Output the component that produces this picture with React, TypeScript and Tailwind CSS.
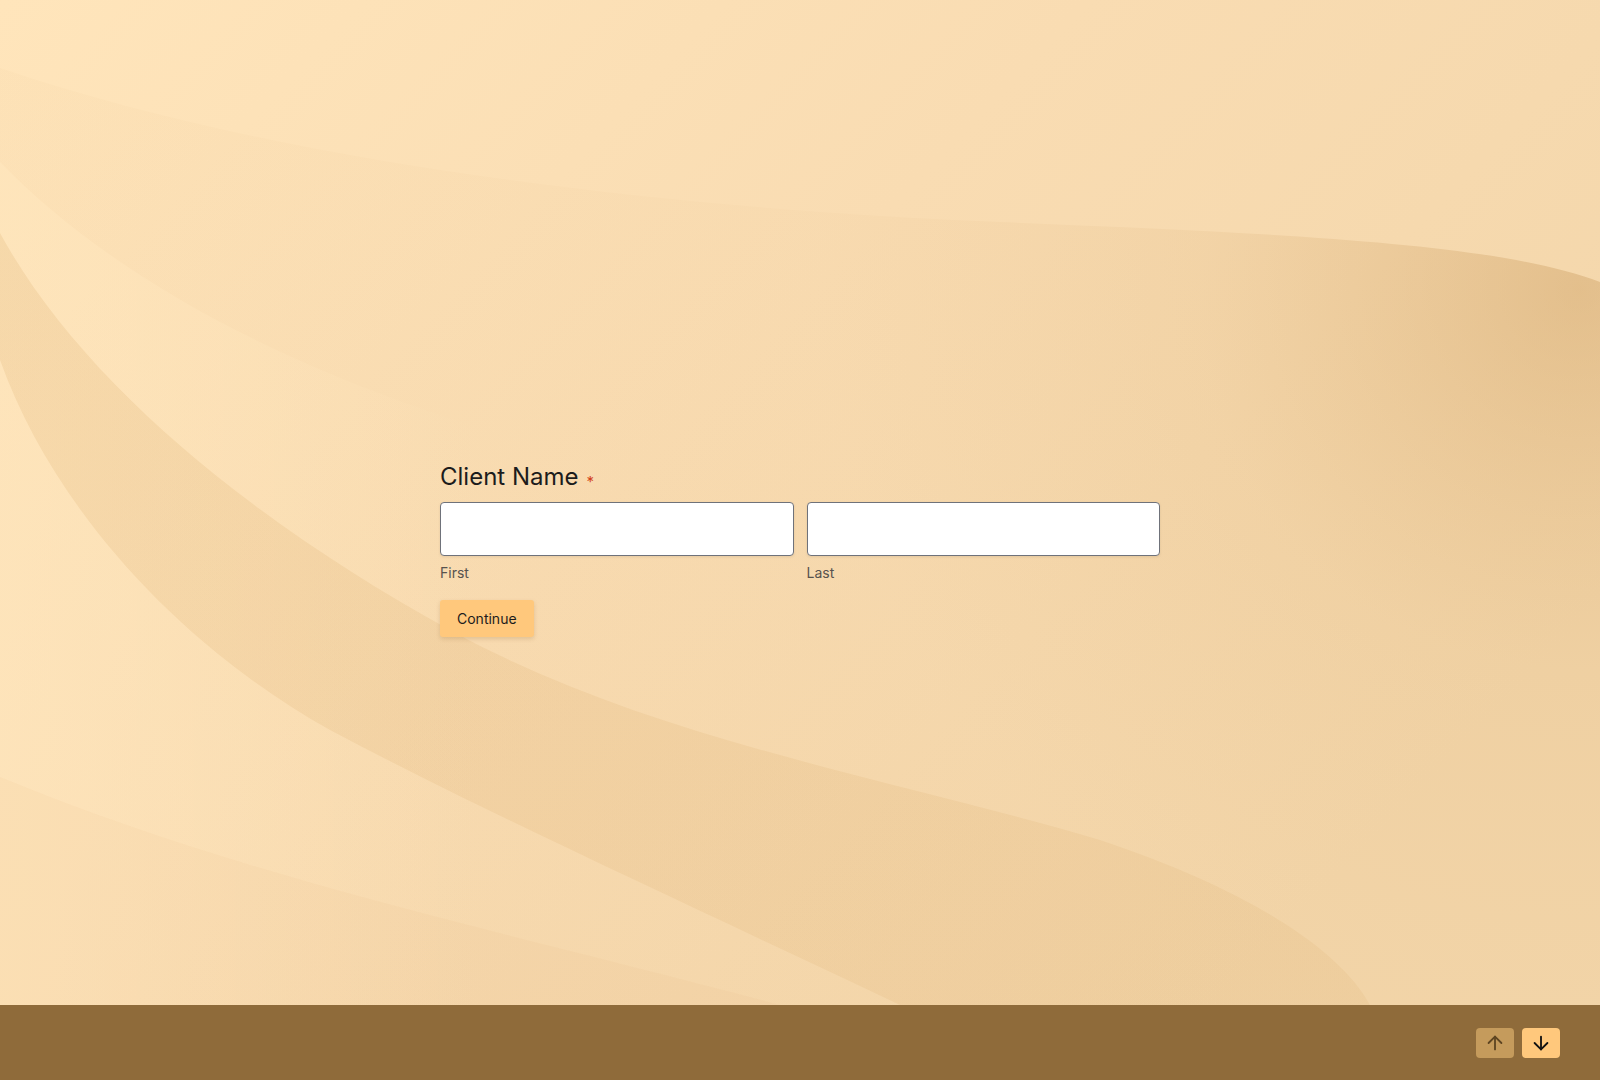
import { ArrowDown, ArrowUp } from "lucide-react";

function Backdrop() {
  return (
    <svg
      className="absolute inset-0 h-full w-full"
      viewBox="0 0 1600 1005"
      preserveAspectRatio="none"
      aria-hidden="true"
    >
      <defs>
        <linearGradient id="base" x1="0" y1="0" x2="1" y2="0.6">
          <stop offset="0" stopColor="#ffe5bb" />
          <stop offset="0.5" stopColor="#f9dcb2" />
          <stop offset="1" stopColor="#f3d6aa" />
        </linearGradient>
        <radialGradient id="shadeTop" cx="1580" cy="290" r="760" gradientUnits="userSpaceOnUse">
          <stop offset="0" stopColor="#c99a5c" stopOpacity="0.4" />
          <stop offset="0.5" stopColor="#d7ab70" stopOpacity="0.14" />
          <stop offset="1" stopColor="#e2b882" stopOpacity="0.06" />
        </radialGradient>
        <linearGradient id="lightLeft" x1="0" y1="0" x2="1" y2="0">
          <stop offset="0" stopColor="#ffe6bd" stopOpacity="0.7" />
          <stop offset="0.75" stopColor="#ffe6bd" stopOpacity="0" />
        </linearGradient>
        <linearGradient id="band" x1="0" y1="0" x2="1" y2="1">
          <stop offset="0" stopColor="#d8a866" stopOpacity="0.2" />
          <stop offset="1" stopColor="#d8a866" stopOpacity="0.14" />
        </linearGradient>
      </defs>
      <rect x="0" y="0" width="1600" height="1005" fill="url(#base)" />
      <path
        d="M0,68 C300,170 700,210 1000,222 C1300,234 1500,244 1600,282 L1600,1005 L0,1005 Z"
        fill="url(#shadeTop)"
      />
      <path
        d="M0,162 C110,275 280,370 520,440 C600,465 640,700 640,1005 L0,1005 Z"
        fill="url(#lightLeft)"
      />
      <path
        d="M0,233 C80,380 250,520 450,630 C650,740 900,780 1100,840 C1250,890 1340,950 1370,1005 L900,1005 C700,910 480,810 330,730 C170,640 50,500 0,360 Z"
        fill="url(#band)"
      />
      <path
        d="M0,777 C250,880 500,930 780,1005 L0,1005 Z"
        fill="#dcae72"
        fillOpacity="0.07"
      />
    </svg>
  );
}

export default function App() {
  return (
    <div className="flex h-[1080px] w-full flex-col font-['Inter','Liberation_Sans',sans-serif]">
      {/* Form area */}
      <main className="relative h-[1005px] overflow-hidden">
        <Backdrop />
        <div className="relative mx-auto w-[720px] pt-[461px]">
          <label className="flex items-center text-[24px] leading-8 font-normal text-[#1c1c1c]">
            Client Name
            <span className="ml-[8px] mt-[9px] text-[15px] leading-none text-[#d2411b]">*</span>
          </label>

          <div className="mt-[9px] grid grid-cols-2 gap-[13px]">
            <div>
              <input
                type="text"
                className="block h-[54px] w-full rounded-[4px] border border-[#6f727a] bg-white px-3 shadow-[0_1px_3px_rgba(0,0,0,0.08)] outline-none"
              />
              <div className="mt-[7px] text-[14px] leading-5 text-[#57534e]">First</div>
            </div>
            <div>
              <input
                type="text"
                className="block h-[54px] w-full rounded-[4px] border border-[#6f727a] bg-white px-3 shadow-[0_1px_3px_rgba(0,0,0,0.08)] outline-none"
              />
              <div className="mt-[7px] text-[14px] leading-5 text-[#57534e]">Last</div>
            </div>
          </div>

          <button className="mt-[17px] h-[37px] rounded-[3px] bg-[#ffc87c] px-[17px] text-[14px] font-normal text-[#1c1c1c] shadow-[0_2px_4px_rgba(120,80,20,0.18)]">
            Continue
          </button>
        </div>
      </main>

      {/* Footer navigation */}
      <footer className="flex h-[75px] items-center justify-end gap-2 bg-[#8f6b3a] pr-10">
        <button className="flex h-[30px] w-[38px] items-center justify-center rounded-[4px] bg-[#c59b5c]">
          <ArrowUp size={22} strokeWidth={2} className="text-[#5e4522]" />
        </button>
        <button className="flex h-[30px] w-[38px] items-center justify-center rounded-[4px] bg-[#ffc87c]">
          <ArrowDown size={22} strokeWidth={2} className="text-[#111111]" />
        </button>
      </footer>
    </div>
  );
}
